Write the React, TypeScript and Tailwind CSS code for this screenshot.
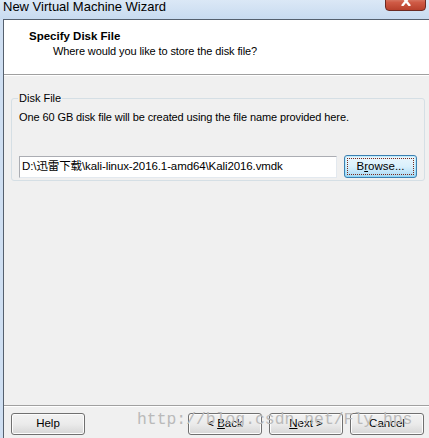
import React from 'react';

const ui = { fontFamily: '"Liberation Sans", "Noto Sans CJK SC", sans-serif' };

function WinButton({ children, className = '' }: { children: React.ReactNode; className?: string }) {
  return (
    <button
      className={`h-[22px] w-[74px] rounded-[3px] border border-[#707070] bg-gradient-to-b from-[#f2f2f2] via-[#ebebeb] to-[#d6d6d6] text-[11.5px] text-black shadow-[inset_0_0_0_1px_#fcfcfc] ${className}`}
    >
      {children}
    </button>
  );
}

function App() {
  return (
    <div className="relative flex h-[438px] w-[429px] flex-col overflow-hidden bg-[#cfdff2]" style={ui}>
      {/* title bar */}
      <div className="relative h-[19px] shrink-0 bg-gradient-to-b from-[#dbe8f6] to-[#c8dbf0] pl-[3px] text-[13px] leading-[15px] text-black">
        <span className="relative -top-[1px]">New Virtual Machine Wizard</span>
        <div className="absolute left-[385px] top-[-6px] flex h-[17px] w-[41px] items-start justify-center rounded-b-[4px] border border-[#6c2a22] bg-gradient-to-b from-[#e0a192] via-[#cf5a45] to-[#b8402c]">
          <svg width="12" height="10" viewBox="0 0 12 10" className="mt-[1px]">
            <path d="M2 0 L10 10 M10 0 L2 10" stroke="#ffffff" strokeWidth="2.4" />
          </svg>
        </div>
      </div>

      {/* client area */}
      <div className="ml-[3px] flex flex-1 flex-col border-l border-t border-[#55606e] bg-[#f0f0f0]">
        <div className="h-[55px] shrink-0 border-b border-[#a0a0a0] bg-white pl-[25px] pt-[9px]">
          <div className="text-[11.5px] font-bold leading-[15px] text-black">Specify Disk File</div>
          <div className="pl-[24px] text-[11px] leading-[15px] tracking-[-0.1px] text-black">
            Where would you like to store the disk file?
          </div>
        </div>

        <div className="flex-1 border-t border-white px-[7px] pt-[15px]">
          <fieldset className="h-[90px] rounded-[3px] border border-[#d5dfe5] px-[7px]">
            <legend className="ml-[-1px] px-[1px] text-[11px] leading-[14px] text-black">Disk File</legend>
            <div className="mt-[5px] text-[11px] leading-[14px] tracking-[-0.1px] text-black">
              One 60 GB disk file will be created using the file name provided here.
            </div>
            <div className="mt-[31px] flex items-center gap-[7px]">
              <div className="flex h-[22px] w-[318px] items-center border border-[#abadb3] border-b-[#e3e9ef] border-r-[#e3e9ef] bg-white pl-[2px] text-[11.5px] tracking-[-0.1px] text-black">
                D:\迅雷下载\kali-linux-2016.1-amd64\Kali2016.vmdk
              </div>
              <button className="flex h-[23px] w-[73px] items-center justify-center rounded-[3px] border border-[#3c7fb1] bg-gradient-to-b from-[#eaf6fd] via-[#d9f0fc] to-[#a7d9f5] p-[2px] text-[11.5px] text-black shadow-[inset_0_0_0_1px_#48d4fd40]">
                <span className="flex h-full w-full items-center justify-center border border-dotted border-[#7a2a1a]">
                  B<u>r</u>owse...
                </span>
              </button>
            </div>
          </fieldset>
        </div>

        <div className="relative h-[33px] shrink-0 border-t border-[#a0a0a0] shadow-[inset_0_1px_0_#ffffff]">
          <div className="flex items-center px-[7px] pt-[7px]">
            <WinButton>Help</WinButton>
            <div className="ml-auto flex gap-[7px]">
              <WinButton>
                &lt; <u>B</u>ack
              </WinButton>
              <WinButton>
                <u>N</u>ext &gt;
              </WinButton>
              <WinButton className="mr-[-2px]">Cancel</WinButton>
            </div>
          </div>
          <div
            className="pointer-events-none absolute left-[133px] top-[4px] whitespace-nowrap text-[16.4px] leading-[20px] text-[#bababa]"
            style={{ fontFamily: '"Liberation Mono", monospace' }}
          >
            http://blog.csdn.net/Fly_hps
          </div>
        </div>
      </div>
    </div>
  );
}

export default App;
